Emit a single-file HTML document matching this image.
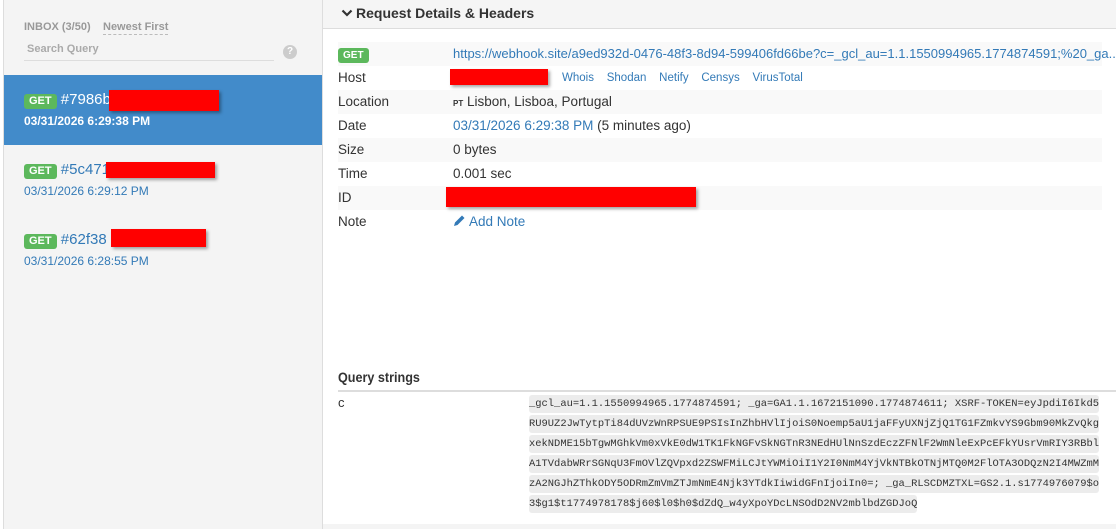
<!DOCTYPE html>
<html><head><meta charset="utf-8"><style>
*{box-sizing:border-box;margin:0;padding:0}
body{width:1116px;height:529px;overflow:hidden;background:#fff;font-family:"Liberation Sans",Arial,sans-serif;font-size:13.5px;color:#333;position:relative}
.side{position:absolute;left:3px;top:0;width:320px;height:529px;background:#f4f4f4;border-left:1px solid #ddd;border-right:1px solid #ddd}
.red{position:absolute;background:#f00;box-shadow:2px 2px 3px rgba(0,0,0,.35)}
.lbl{background:#5cb85c;color:#fff;font-weight:bold;font-size:11px;border-radius:3px;padding:2px 5px;display:inline-block;line-height:11px}
.abs{position:absolute;white-space:nowrap}
.main{position:absolute;left:323px;top:0;right:0;height:529px}
.row{position:absolute;left:15px;width:764px;height:24px;line-height:24px}
.row.s{background:#f9f9f9}
.row .k{position:absolute;left:0}
.row .v{position:absolute;left:115px;white-space:nowrap}
a{color:#337ab7;text-decoration:none}
.code{position:absolute;left:529px;top:394px;width:576px;font-family:"Liberation Mono",monospace;font-size:10.45px;line-height:20px;color:#333;word-break:break-all}
.code span{background:#ececec;border-radius:3px;box-decoration-break:clone;-webkit-box-decoration-break:clone;padding:3px 0}
</style></head><body>
<div class="side">
 <div class="abs" style="left:20px;top:21px;font-size:11px;font-weight:bold;color:#999">INBOX (3/50)</div>
 <div class="abs" style="left:99px;top:21px;font-size:11px;font-weight:bold;color:#999;border-bottom:1px dashed #bbb;padding-bottom:1px">Newest First</div>
 <div class="abs" style="left:20px;top:43px;width:250px;height:18px;border-bottom:1px solid #ddd;font-size:11px;font-weight:bold;color:#aaa">&nbsp;Search Query</div>
 <div class="abs" style="left:279px;top:45px;width:14px;height:14px;border-radius:50%;background:#ccc;color:#fff;font-size:10px;font-weight:bold;text-align:center;line-height:14px">?</div>
 <div class="abs" style="left:0;top:75px;width:318px;height:70px;background:#428bca"></div>
 <div class="abs" style="left:20px;top:91px;color:#fff;font-size:15px"><span class="lbl">GET</span> #7986b</div>
 <div class="abs" style="left:20px;top:114px;color:#fff;font-size:12px;font-weight:bold">03/31/2026 6:29:38 PM</div>
 <div class="abs" style="left:20px;top:161px;color:#337ab7;font-size:15px"><span class="lbl">GET</span> #5c471</div>
 <div class="abs" style="left:20px;top:184px;color:#337ab7;font-size:12px">03/31/2026 6:29:12 PM</div>
 <div class="abs" style="left:20px;top:231px;color:#337ab7;font-size:15px"><span class="lbl">GET</span> #62f38</div>
 <div class="abs" style="left:20px;top:254px;color:#337ab7;font-size:12px">03/31/2026 6:28:55 PM</div>
</div>
<div class="red" style="left:109px;top:90px;width:110px;height:21px"></div>
<div class="red" style="left:106px;top:162px;width:109px;height:16px"></div>
<div class="red" style="left:111px;top:229px;width:95px;height:18px"></div>
<div class="main">
 <div class="abs" style="left:0;top:0;right:0;height:29px;background:#f5f5f5;border-bottom:1px solid #ddd"></div>
 <div class="abs" style="left:18px;top:5px;font-size:14px;font-weight:bold;color:#333"><svg width="12" height="10" viewBox="0 0 12 10" style="margin-right:3px"><path d="M1.5 2.5 L6 7 L10.5 2.5" stroke="#333" stroke-width="2.2" fill="none"/></svg>Request Details &amp; Headers</div>
 <div class="row s" style="top:42px"><span class="k"><span class="lbl" style="font-size:10px">GET</span></span><span class="v" style="font-size:13px"><a>https://webhook.site/a9ed932d-0476-48f3-8d94-599406fd66be?c=_gcl_au=1.1.1550994965.1774874591;%20_ga...</a></span></div>
 <div class="row" style="top:66px"><span class="k">Host</span><span class="v" style="left:224px;font-size:11.5px"><a>Whois</a>&nbsp;&nbsp;&nbsp;&nbsp;<a>Shodan</a>&nbsp;&nbsp;&nbsp;&nbsp;<a>Netify</a>&nbsp;&nbsp;&nbsp;&nbsp;<a>Censys</a>&nbsp;&nbsp;&nbsp;&nbsp;<a>VirusTotal</a></span></div>
 <div class="row s" style="top:90px"><span class="k">Location</span><span class="v"><span style="font-size:8px;font-weight:bold">PT</span> Lisbon, Lisboa, Portugal</span></div>
 <div class="row" style="top:114px"><span class="k">Date</span><span class="v"><a>03/31/2026 6:29:38 PM</a> (5 minutes ago)</span></div>
 <div class="row s" style="top:138px"><span class="k">Size</span><span class="v">0 bytes</span></div>
 <div class="row" style="top:162px"><span class="k">Time</span><span class="v">0.001 sec</span></div>
 <div class="row s" style="top:186px"><span class="k">ID</span></div>
 <div class="row" style="top:210px"><span class="k">Note</span><span class="v"><a><svg width="13" height="13" viewBox="0 0 13 13" style="vertical-align:-1px"><path d="M1 12 L2 8.5 L9 1.5 L11.5 4 L4.5 11 Z" fill="#337ab7"/></svg> Add Note</a></span></div>
 <div class="abs" style="left:15px;top:369px;font-size:14px;font-weight:bold;transform:scaleX(.9);transform-origin:left">Query strings</div>
 <div class="abs" style="left:15px;top:390px;width:779px;height:2px;background:#ddd"></div>
 <div class="abs" style="left:15px;top:395px;font-size:13px">c</div>
 <div class="abs" style="left:0;top:524px;right:0;height:5px;background:#f4f4f4"></div>
</div>
<div class="red" style="left:450px;top:69px;width:98px;height:16px"></div>
<div class="red" style="left:446px;top:187px;width:250px;height:20px"></div>
<div class="code"><span>_gcl_au=1.1.1550994965.1774874591; _ga=GA1.1.1672151090.1774874611; XSRF-TOKEN=eyJpdiI6Ikd5 RU9UZ2JwTytpTi84dUVzWnRPSUE9PSIsInZhbHVlIjoiS0Noemp5aU1jaFFyUXNjZjQ1TG1FZmkvYS9Gbm90MkZvQkg xekNDME15bTgwMGhkVm0xVkE0dW1TK1FkNGFvSkNGTnR3NEdHUlNnSzdEczZFNlF2WmNleExPcEFkYUsrVmRIY3RBbl A1TVdabWRrSGNqU3FmOVlZQVpxd2ZSWFMiLCJtYWMiOiI1Y2I0NmM4YjVkNTBkOTNjMTQ0M2FlOTA3ODQzN2I4MWZmM zA2NGJhZThkODY5ODRmZmVmZTJmNmE4Njk3YTdkIiwidGFnIjoiIn0=; _ga_RLSCDMZTXL=GS2.1.s1774976079$o 3$g1$t1774978178$j60$l0$h0$dZdQ_w4yXpoYDcLNSOdD2NV2mblbdZGDJoQ</span></div>
</body></html>
